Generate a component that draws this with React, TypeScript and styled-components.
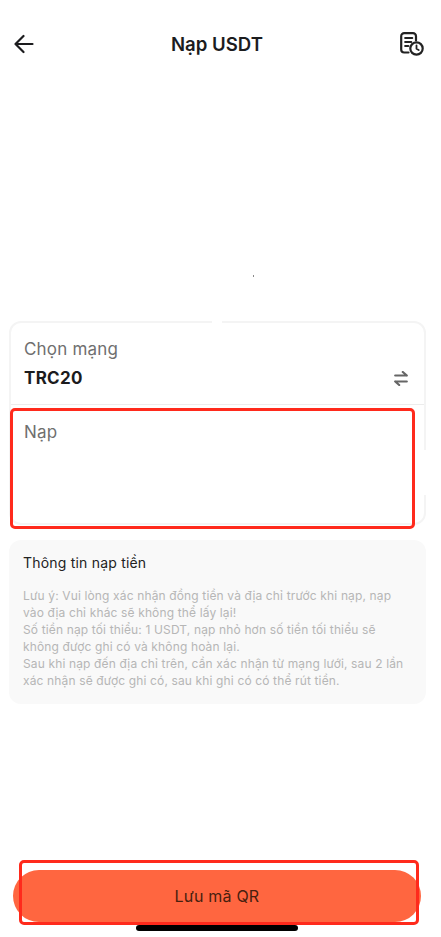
import React from "react";
import styled, { createGlobalStyle } from "styled-components";

const Global = createGlobalStyle`
  html, body { margin: 0; padding: 0; background: #fff; }
  body { font-family: Inter, "Noto Sans", sans-serif; }
`;

const Page = styled.div`
  position: relative;
  width: 441px;
  height: 937px;
  overflow: hidden;
  background: #fff;
  display: flex;
  flex-direction: column;
`;

const Header = styled.header`
  height: 88px;
  flex: none;
  box-sizing: border-box;
  padding: 0 17px 0 14px;
  display: flex;
  align-items: center;
  justify-content: space-between;
`;

const Title = styled.h1`
  margin: 0;
  font-size: 18.6px;
  font-weight: 600;
  color: #1c1c1e;
`;

const HeaderIcon = styled.svg`
  display: block;
  flex: none;
`;

const QrArea = styled.div`
  height: 233px;
  flex: none;
  position: relative;
`;

const Speck = styled.span`
  position: absolute;
  left: 253px;
  top: 187px;
  width: 1px;
  height: 2px;
  background: #8a8a8a;
`;

const Notch = styled.span`
  position: absolute;
  left: 212px;
  bottom: -2px;
  width: 10px;
  height: 3px;
  background: #fff;
  z-index: 1;
`;

const NetworkCard = styled.section`
  position: relative;
  margin: 0 15px 0 9px;
  height: 204px;
  flex: none;
  box-sizing: border-box;
  border: 2px solid #f4f4f4;
  border-radius: 12px;
  display: flex;
  flex-direction: column;
`;

const BorderGap = styled.span`
  position: absolute;
  right: -2px;
  top: 127px;
  width: 2px;
  height: 45px;
  background: #fff;
`;

const NetworkRow = styled.div`
  height: 82px;
  flex: none;
  box-sizing: border-box;
  padding: 15px 16px 0 13px;
  border-bottom: 1px solid #ececec;
`;

const FieldLabel = styled.div`
  font-size: 17px;
  line-height: 22px;
  letter-spacing: 0.2px;
  color: #6f6f6f;
`;

const ValueLine = styled.div`
  margin-top: 7px;
  display: flex;
  align-items: center;
  justify-content: space-between;
`;

const Value = styled.div`
  font-size: 17px;
  line-height: 22px;
  font-weight: 700;
  letter-spacing: 0.3px;
  color: #1c1c1e;
`;

const DepositRow = styled.div`
  padding: 16px 13px 0;
`;

const InfoCard = styled.section`
  margin: 15px 15px 0 9px;
  height: 164px;
  flex: none;
  box-sizing: border-box;
  padding: 13px 14px 0 14px;
  border-radius: 12px;
  background: #f9f9f9;
`;

const InfoTitle = styled.h2`
  margin: 0;
  font-size: 14px;
  line-height: 20px;
  font-weight: 400;
  letter-spacing: 0.2px;
  color: #222;
`;

const InfoBody = styled.p`
  margin: 14px 0 0;
  font-size: 12px;
  line-height: 17px;
  letter-spacing: 0.14px;
  color: #b6b6b6;
  white-space: nowrap;
`;

const Footer = styled.footer`
  margin-top: auto;
  padding: 0 20px 6px 13px;
  display: flex;
  flex-direction: column;
  align-items: center;
  gap: 3px;
`;

const SaveButton = styled.button`
  width: 408px;
  height: 52px;
  padding: 0;
  border: none;
  border-radius: 26px;
  background: #ff6640;
  color: #47200f;
  font-family: inherit;
  font-size: 16px;
  letter-spacing: 0.2px;
`;

const HomeBar = styled.div`
  width: 162px;
  height: 6px;
  border-radius: 3px;
  background: #000;
`;

const Annotation = styled.div<{ $l: number; $t: number; $w: number; $h: number }>`
  position: absolute;
  left: ${(p) => p.$l}px;
  top: ${(p) => p.$t}px;
  width: ${(p) => p.$w}px;
  height: ${(p) => p.$h}px;
  box-sizing: border-box;
  border: 3px solid #ff2a1c;
  border-radius: 5px;
  pointer-events: none;
`;

export default function App() {
  return (
    <Page>
      <Global />
      <Header>
        <HeaderIcon width="20" height="20" viewBox="0 0 20 20" fill="none" stroke="#1c1c1e" strokeWidth="2.2" strokeLinecap="round" strokeLinejoin="round">
          <path d="M18.5 10H1.5M9.5 2l-8 8 8 8" />
        </HeaderIcon>
        <Title>Nạp USDT</Title>
        <HeaderIcon width="24" height="24" viewBox="0 0 24 24" fill="none" stroke="#222" strokeWidth="2.2" strokeLinecap="round" strokeLinejoin="round">
          <path d="M16 8.5V4.2A3 3 0 0 0 13 1.2H4.2A3 3 0 0 0 1.2 4.2V17.5A3 3 0 0 0 4.2 20.5H8.5" />
          <path d="M5.2 6h7M5.2 10h6M5.2 14h3" />
          <circle cx="16.5" cy="16.5" r="6.2" />
          <path d="M16.5 13.5v3.3l2.2 1.2" strokeWidth="1.8" />
        </HeaderIcon>
      </Header>
      <QrArea>
        <Speck />
        <Notch />
      </QrArea>
      <NetworkCard>
        <BorderGap />
        <NetworkRow>
          <FieldLabel>Chọn mạng</FieldLabel>
          <ValueLine>
            <Value>TRC20</Value>
            <HeaderIcon width="14" height="15" viewBox="0 0 14 15" fill="none" stroke="#666" strokeWidth="2.2" strokeLinecap="round" strokeLinejoin="round">
              <path d="M1.2 4.5h11.6M8.8 1l4 3.5M12.8 10.5H1.2M5.2 14l-4-3.5" />
            </HeaderIcon>
          </ValueLine>
        </NetworkRow>
        <DepositRow>
          <FieldLabel>Nạp</FieldLabel>
        </DepositRow>
      </NetworkCard>
      <InfoCard>
        <InfoTitle>Thông tin nạp tiền</InfoTitle>
        <InfoBody>
          Lưu ý: Vui lòng xác nhận đồng tiền và địa chỉ trước khi nạp, nạp
          <br />
          vào địa chỉ khác sẽ không thể lấy lại!
          <br />
          Số tiền nạp tối thiểu: 1 USDT, nạp nhỏ hơn số tiền tối thiểu sẽ
          <br />
          không được ghi có và không hoàn lại.
          <br />
          Sau khi nạp đến địa chỉ trên, cần xác nhận từ mạng lưới, sau 2 lần
          <br />
          xác nhận sẽ được ghi có, sau khi ghi có có thể rút tiền.
        </InfoBody>
      </InfoCard>
      <Footer>
        <SaveButton>Lưu mã QR</SaveButton>
        <HomeBar />
      </Footer>
      <Annotation $l={10} $t={408} $w={405} $h={121} />
      <Annotation $l={19} $t={860} $w={400} $h={65} />
    </Page>
  );
}
